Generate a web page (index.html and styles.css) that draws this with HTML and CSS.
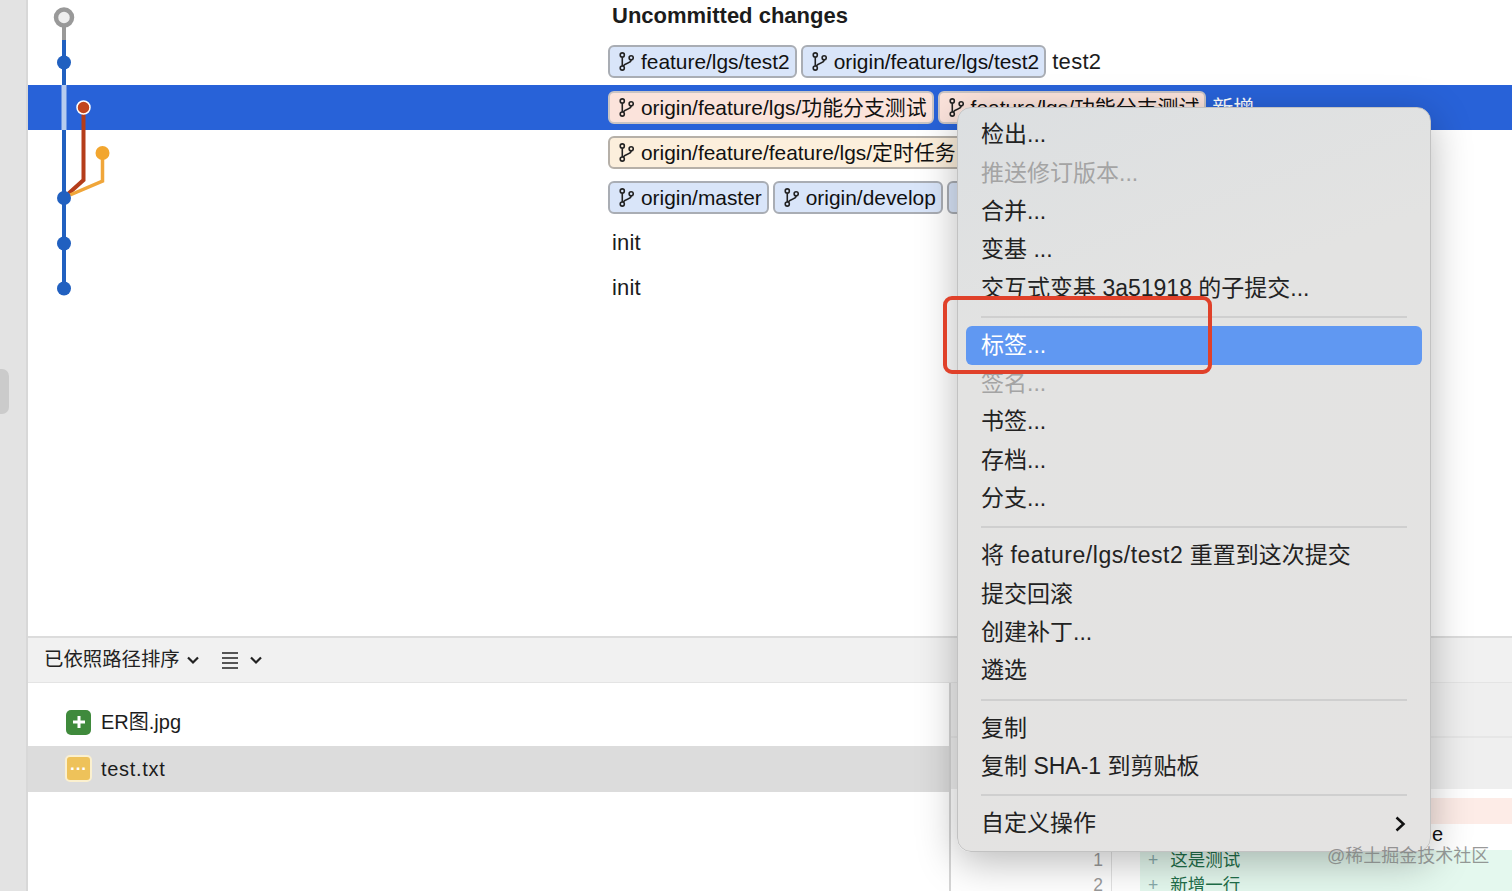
FILE: index.html
```html
<!DOCTYPE html>
<html lang="zh">
<head>
<meta charset="utf-8">
<title>Sourcetree</title>
<link rel="stylesheet" href="styles.css">
</head>
<body>
<svg class="defs" width="0" height="0" aria-hidden="true">
  <symbol id="branch" viewBox="0 0 16 20">
    <circle cx="3.500" cy="3" r="2.200"/>
    <circle cx="3.500" cy="17" r="2.200"/>
    <circle cx="13" cy="6" r="2.200"/>
    <path d="M3.500 5.200V14.800M13 8.200C13 12.500 6 11 4.500 15"/>
  </symbol>
</svg>
<div class="app">
  <aside class="rail"><div class="rail-handle"></div></aside>
  <main class="main">
    <section class="commits">
      <div class="row first"><span class="title">Uncommitted changes</span></div>
      <div class="row">
        <span class="tag blue"><svg class="bi"><use href="#branch"/></svg>feature/lgs/test2</span>
        <span class="tag blue"><svg class="bi"><use href="#branch"/></svg>origin/feature/lgs/test2</span>
        <span class="msg">test2</span>
      </div>
      <div class="row selected">
        <span class="tag pink"><svg class="bi"><use href="#branch"/></svg>origin/feature/lgs/功能分支测试</span>
        <span class="tag pink"><svg class="bi"><use href="#branch"/></svg>feature/lgs/功能分支测试</span>
        <span class="msg">新增</span>
      </div>
      <div class="row">
        <span class="tag cream"><svg class="bi"><use href="#branch"/></svg>origin/feature/feature/lgs/定时任务</span>
      </div>
      <div class="row">
        <span class="tag blue"><svg class="bi"><use href="#branch"/></svg>origin/master</span>
        <span class="tag blue"><svg class="bi"><use href="#branch"/></svg>origin/develop</span>
        <span class="tag blue"><svg class="bi"><use href="#branch"/></svg>master</span>
      </div>
      <div class="row"><span class="plain">init</span></div>
      <div class="row"><span class="plain">init</span></div>
      <svg class="graph" width="120" height="300" viewBox="0 0 120 300" aria-hidden="true">
        <path class="g-gray" d="M64 17V40"/>
        <path class="g-blue" d="M64 40V85"/>
        <path class="g-pale" d="M64 85V130"/>
        <path class="g-blue" d="M64 130V288"/>
        <path class="g-red" d="M83.500 107V180L68 194"/>
        <path class="g-orange" d="M102.500 153V181L70 195"/>
        <circle class="n-top" cx="64" cy="17.500" r="8"/>
        <circle class="n-blue" cx="64" cy="62.500" r="7"/>
        <circle class="n-red" cx="83.500" cy="107.500" r="6.500"/>
        <circle class="n-orange" cx="102.500" cy="153" r="7"/>
        <circle class="n-blue" cx="64" cy="198" r="7"/>
        <circle class="n-blue" cx="64" cy="243.500" r="7"/>
        <circle class="n-blue" cx="64" cy="288.500" r="7"/>
      </svg>
    </section>
    <section class="details">
      <div class="toolbar">
        <span class="sort">已依照路径排序</span>
        <svg class="chev" width="14" height="10" viewBox="0 0 14 10"><path d="M2 2.500L7 7.500L12 2.500"/></svg>
        <svg class="list-ic" width="18" height="18" viewBox="0 0 18 18"><path d="M1 2H17M1 7H17M1 12H17M1 17H17"/></svg>
        <svg class="chev" width="14" height="10" viewBox="0 0 14 10"><path d="M2 2.500L7 7.500L12 2.500"/></svg>
      </div>
      <div class="split">
        <div class="files">
          <div class="file">
            <span class="fi added"><svg width="16" height="16" viewBox="0 0 16 16"><path d="M8 2V14M2 8H14"/></svg></span>
            <span class="fname">ER图.jpg</span>
          </div>
          <div class="file active">
            <span class="fi modified">···</span>
            <span class="fname">test.txt</span>
          </div>
        </div>
        <div class="diff">
          <div class="hunk-a"></div>
          <div class="hunk-b"></div>
          <div class="gap"></div>
          <div class="dl del"><span class="ln"></span><span class="code"></span></div>
          <div class="dl ctx"><span class="ln"></span><span class="code tail">e</span></div>
          <div class="dl add"><span class="ln">1</span><span class="code"><i>+</i>这是测试</span></div>
          <div class="dl add"><span class="ln">2</span><span class="code"><i>+</i>新增一行</span></div>
        </div>
      </div>
    </section>
  </main>
</div>
<nav class="menu">
  <div class="mi">检出...</div>
  <div class="mi off">推送修订版本...</div>
  <div class="mi">合并...</div>
  <div class="mi">变基 ...</div>
  <div class="mi">交互式变基 3a51918 的子提交...</div>
  <div class="sep"></div>
  <div class="mi hot">标签...</div>
  <div class="mi off">签名...</div>
  <div class="mi">书签...</div>
  <div class="mi">存档...</div>
  <div class="mi">分支...</div>
  <div class="sep"></div>
  <div class="mi"><span>将 <span class="wide">feature/lgs/test2</span> 重置到这次提交</span></div>
  <div class="mi">提交回滚</div>
  <div class="mi">创建补丁...</div>
  <div class="mi">遴选</div>
  <div class="sep"></div>
  <div class="mi">复制</div>
  <div class="mi">复制 SHA-1 到剪贴板</div>
  <div class="sep"></div>
  <div class="mi more">自定义操作
    <svg width="12" height="18" viewBox="0 0 12 18"><path d="M2.500 2.500L9.500 9L2.500 15.500"/></svg>
  </div>
</nav>
<div class="callout"></div>
<div class="watermark">@稀土掘金技术社区</div>
</body>
</html>
```
FILE: styles.css
```css
* { box-sizing: border-box; }
html, body { margin: 0; height: 891px; overflow: hidden; background: #fff; }
body {
  position: relative;
  font-family: "Liberation Sans", "Noto Sans CJK SC", sans-serif;
  line-height: 1.2;
  color: #1c1c1c;
}
.defs { position: absolute; }
.app { display: flex; height: 891px; }

.rail {
  width: 28px; flex: none; background: #e3e3e3;
  border-right: 2px solid #d8d8d8;
  display: flex; align-items: flex-start;
  padding-top: 369px;
}
.rail-handle { width: 9px; height: 45px; background: #cbcbcb; border-radius: 0 7px 7px 0; }

.main { flex: 1; display: flex; flex-direction: column; min-width: 0; }

.commits { position: relative; height: 636px; flex: none; }
.row {
  height: 45.25px; display: flex; align-items: center; gap: 4px;
  padding-left: 580px; white-space: nowrap; overflow: hidden;
  font-size: 20.9px;
}
.row.first { margin-top: -6px; }
.row.selected { background: #2862d8; color: #fff; }
.title { font-weight: 700; font-size: 22px; padding-left: 4px; }
.plain { padding-left: 4px; font-size: 22px; letter-spacing: .2px; }
.msg { padding-left: 2px; font-size: 22px; letter-spacing: .3px; }
.selected .msg { font-size: 21px; letter-spacing: 0; }

.tag {
  display: inline-flex; align-items: center; height: 33px;
  border: 2px solid #a9adb4; border-radius: 6px;
  padding: 0 5px 0 9px; color: #111; flex: none;
}
.tag.blue { background: #d9e5f9; }
.tag.pink { background: #fbe3db; border-color: #c9c4c4; }
.tag.cream { background: #fcefdc; border-color: #b6b0a8; }
.bi {
  width: 15px; height: 19px; margin-right: 7px; flex: none;
  fill: none; stroke: #222; stroke-width: 1.700;
}

.graph { position: absolute; left: -28px; top: 0; }
.graph path { fill: none; }
.g-gray { stroke: #999; stroke-width: 4; }
.g-blue { stroke: #2160c0; stroke-width: 4; }
.g-pale { stroke: #b8ccef; stroke-width: 5; }
.g-red { stroke: #b53d1a; stroke-width: 4; }
.g-orange { stroke: #f0a63a; stroke-width: 3.500; }
.n-top { fill: #eee; stroke: #999; stroke-width: 4.500; }
.n-blue { fill: #2160c0; }
.n-red { fill: #c2461f; stroke: #fff; stroke-width: 1.500; }
.n-orange { fill: #f2a62f; }

.details { flex: 1; display: flex; flex-direction: column; min-height: 0; }
.toolbar {
  height: 47px; flex: none; display: flex; align-items: center;
  background: #f1f1f1; border-top: 2px solid #dcdcdc; border-bottom: 1px solid #e4e4e4;
  padding-left: 16px; font-size: 19.4px; color: #222;
}
.sort { margin-right: 6px; }
.chev { fill: none; stroke: #222; stroke-width: 2.200; }
.list-ic { margin: 0 10px 0 21px; fill: none; stroke: #222; stroke-width: 1.500; }

.split { flex: 1; display: flex; min-height: 0; }
.files { width: 921px; flex: none; padding-top: 16px; }
.file { height: 46.500px; display: flex; align-items: center; padding-left: 38px; font-size: 20px; gap: 10px; }
.file.active { background: #dcdcdc; }
.file.active .fname { letter-spacing: .7px; }
.fi {
  width: 25px; height: 25px; flex: none; border-radius: 5px;
  display: flex; align-items: center; justify-content: center;
}
.fi.added { background: #3f8a3c; }
.fi.added path { fill: none; stroke: #fff; stroke-width: 3; }
.fi.modified {
  background: #eec25a; color: #fff; border: 2px solid #fbf0cf;
  width: 27px; height: 27px; margin-left: -1px; margin-right: -1px; font-size: 17px; font-weight: 700;
}

.diff { flex: 1; border-left: 2px solid #d5d5d5; min-width: 0; }
.hunk-a { height: 55px; background: #efefef; border-bottom: 2px solid #e6e6e6; }
.hunk-b { height: 51px; background: #efefef; }
.gap { height: 9px; }
.dl { display: flex; height: 26px; font-size: 17.5px; line-height: 20px; }
.ln { width: 161px; flex: none; text-align: right; padding: 0 8px 0 0; color: #9a9a9a; border-right: 1px solid #e2e2e2; }
.code { flex: 1; margin-left: 28px; padding-left: 8px; white-space: nowrap; color: #1f6f4a; }
.code i { font-style: normal; color: #8aa; margin-right: 12px; }
.code.tail { margin-left: 0; padding-left: 320px; color: #111; font-size: 20px; line-height: 20px; }
.del .code { background: #fdece7; }
.add .code { background: #e4f8ee; }
.add { height: 25px; }

.menu {
  position: absolute; left: 957px; top: 107px; width: 474px; height: 745px;
  padding-top: 8px;
  background: linear-gradient(160deg, #dcdfe1 0, #e3e3e2 30%, #e4e3e2 100%);
  border: 1px solid #c2c2c2; border-radius: 14px;
  box-shadow: 0 10px 40px rgba(0, 0, 0, .28);
  font-size: 23px; color: #222;
}
.mi {
  height: 38.300px; margin: 0 8px; padding: 0 15px;
  display: flex; align-items: center; border-radius: 6px; white-space: nowrap;
}
.mi.off { color: #a4a4a4; }
.mi.hot { background: #6098f2; color: #fff; }
.mi.more { justify-content: space-between; padding-right: 16px; }
.more svg { fill: none; stroke: #111; stroke-width: 2.500; }
.wide { letter-spacing: .55px; }
.sep { height: 2px; margin: 8.500px 23px; background: #cfcfcf; }

.callout {
  position: absolute; left: 943px; top: 296px; width: 269px; height: 78px;
  border: 4px solid #e0412a; border-radius: 9px;
}
.watermark {
  position: absolute; left: 1327px; top: 845px; font-size: 18px; line-height: 22px;
  color: rgba(120, 120, 120, .75); white-space: nowrap;
}
```
